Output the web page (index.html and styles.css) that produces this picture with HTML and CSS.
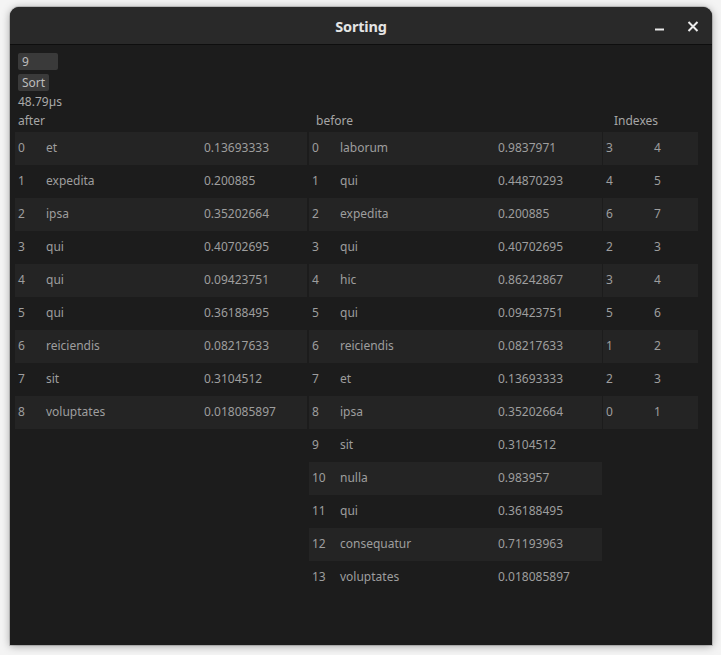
FILE: index.html
```html
<!DOCTYPE html>
<html>
<head>
<meta charset="utf-8">
<link rel="stylesheet" href="styles.css">
</head>
<body>
<div class="window">
  <div class="titlebar">
    <span class="title">Sorting</span>
    <div class="controls">
      <svg class="icon" width="12" height="12" viewBox="0 0 12 12"><rect x="1" y="7.5" width="9" height="2" fill="#e8e8e8"/></svg>
      <svg class="icon" width="12" height="12" viewBox="0 0 12 12"><path d="M1.5 1 L10.5 10 M10.5 1 L1.5 10" stroke="#ececec" stroke-width="2"/></svg>
    </div>
  </div>
  <div class="content">
    <div class="input">9</div>
    <div class="button">Sort</div>
    <div class="elapsed">48.79µs</div>
    <div class="tables">
      <div class="col col-after">
        <div class="label">after</div>
        <div class="row"><span>0</span><span>et</span><span>0.13693333</span></div>
        <div class="row"><span>1</span><span>expedita</span><span>0.200885</span></div>
        <div class="row"><span>2</span><span>ipsa</span><span>0.35202664</span></div>
        <div class="row"><span>3</span><span>qui</span><span>0.40702695</span></div>
        <div class="row"><span>4</span><span>qui</span><span>0.09423751</span></div>
        <div class="row"><span>5</span><span>qui</span><span>0.36188495</span></div>
        <div class="row"><span>6</span><span>reiciendis</span><span>0.08217633</span></div>
        <div class="row"><span>7</span><span>sit</span><span>0.3104512</span></div>
        <div class="row"><span>8</span><span>voluptates</span><span>0.018085897</span></div>
      </div>
      <div class="col col-before">
        <div class="label">before</div>
        <div class="row"><span>0</span><span>laborum</span><span>0.9837971</span></div>
        <div class="row"><span>1</span><span>qui</span><span>0.44870293</span></div>
        <div class="row"><span>2</span><span>expedita</span><span>0.200885</span></div>
        <div class="row"><span>3</span><span>qui</span><span>0.40702695</span></div>
        <div class="row"><span>4</span><span>hic</span><span>0.86242867</span></div>
        <div class="row"><span>5</span><span>qui</span><span>0.09423751</span></div>
        <div class="row"><span>6</span><span>reiciendis</span><span>0.08217633</span></div>
        <div class="row"><span>7</span><span>et</span><span>0.13693333</span></div>
        <div class="row"><span>8</span><span>ipsa</span><span>0.35202664</span></div>
        <div class="row"><span>9</span><span>sit</span><span>0.3104512</span></div>
        <div class="row"><span>10</span><span>nulla</span><span>0.983957</span></div>
        <div class="row"><span>11</span><span>qui</span><span>0.36188495</span></div>
        <div class="row"><span>12</span><span>consequatur</span><span>0.71193963</span></div>
        <div class="row"><span>13</span><span>voluptates</span><span>0.018085897</span></div>
      </div>
      <div class="col col-idx">
        <div class="label">Indexes</div>
        <div class="row idx"><span>3</span><span>4</span></div>
        <div class="row idx"><span>4</span><span>5</span></div>
        <div class="row idx"><span>6</span><span>7</span></div>
        <div class="row idx"><span>2</span><span>3</span></div>
        <div class="row idx"><span>3</span><span>4</span></div>
        <div class="row idx"><span>5</span><span>6</span></div>
        <div class="row idx"><span>1</span><span>2</span></div>
        <div class="row idx"><span>2</span><span>3</span></div>
        <div class="row idx"><span>0</span><span>1</span></div>
      </div>
    </div>
  </div>
</div>
</body>
</html>
```
FILE: styles.css
```css
html, body {
  margin: 0;
  padding: 0;
  background: #f4f4f4;
  width: 721px;
  height: 655px;
  overflow: hidden;
}
body {
  font-family: "Noto Sans", "Open Sans", sans-serif;
  font-size: 12px;
}
.window {
  margin: 7px 0 0 10px;
  width: 702px;
  height: 638px;
  background: #1c1c1c;
  border-radius: 9px 9px 0 0;
  box-shadow: 0 1px 8px rgba(0,0,0,0.35), 0 0 0 1px rgba(0,0,0,0.15);
  overflow: hidden;
  display: flex;
  flex-direction: column;
}
.titlebar {
  height: 37px;
  flex: none;
  background: #292929;
  border-bottom: 1px solid #0e0e0e;
  position: relative;
  display: flex;
  align-items: center;
  justify-content: center;
}
.title {
  color: #e4e4e4;
  font-weight: bold;
  font-size: 14.5px;
  letter-spacing: -0.2px;
}
.controls {
  position: absolute;
  right: 13px;
  top: 14px;
  display: flex;
  gap: 21px;
}
.icon { display: block; }
.content {
  padding: 8px 8px 0 8px;
  display: flex;
  flex-direction: column;
  align-items: flex-start;
}
.input {
  width: 36px;
  height: 17px;
  padding-left: 4px;
  background: #3a3a3a;
  color: #bdbdbd;
  line-height: 17px;
  border-radius: 2px;
}
.button {
  margin-top: 4px;
  height: 17px;
  padding: 0 4px;
  background: #3a3a3a;
  color: #bdbdbd;
  line-height: 17px;
  border-radius: 2px;
}
.elapsed {
  margin-top: 2px;
  color: #aaaaaa;
  line-height: 18px;
}
.tables {
  display: flex;
  margin-left: -3px;
  align-items: flex-start;
}
.col { display: flex; flex-direction: column; }
.col-after { width: 292px; margin-right: 2px; }
.col-before { width: 293px; margin-right: 1px; }
.col-idx { width: 95px; }
.label {
  color: #a6a6a6;
  line-height: 18px;
  margin-top: 1px;
  margin-bottom: 2px;
}
.col-after .label { padding-left: 3px; }
.col-before .label { padding-left: 7px; }
.col-idx .label { padding-left: 11px; }
.row {
  height: 33px;
  box-sizing: border-box;
  padding-bottom: 2px;
  display: grid;
  grid-template-columns: 28px 158px auto;
  align-items: center;
  padding-left: 3px;
  color: #9e9e9e;
}
.row:nth-child(even) { background: #242424; }
.row.idx { grid-template-columns: 48px auto; }
```
